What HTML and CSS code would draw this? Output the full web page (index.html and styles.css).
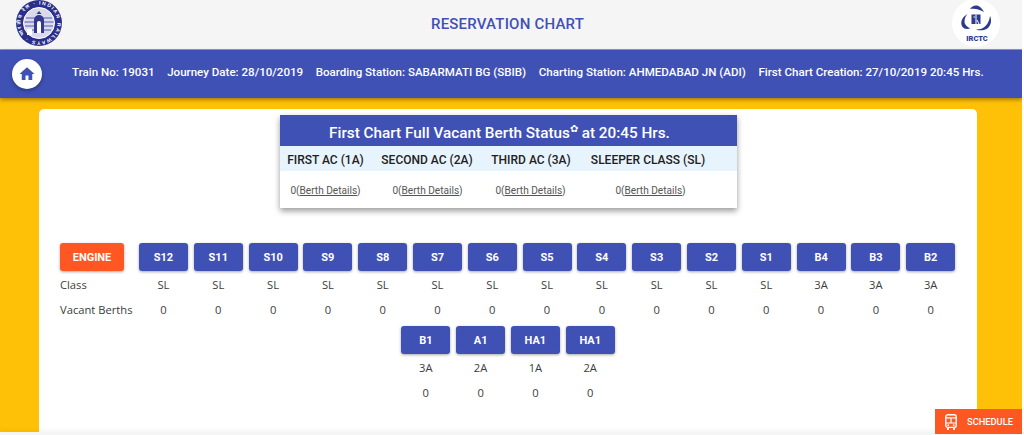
FILE: index.html
```html
<!DOCTYPE html>
<html lang="en">
<head>
    <meta charset="UTF-8">
    <meta name="viewport" content="width=device-width, initial-scale=1.0">
    <title>Reservation Chart</title>
    <link rel="stylesheet" href="styles.css">
</head>
<body>
    <header class="top-bar">
        <svg class="rail-logo" viewBox="0 0 46 46">
            <defs><path id="ringText" d="M23 4.500a18.500 18.500 0 1 1 -.01 0"/></defs>
            <circle cx="23" cy="23" r="23" fill="#2a2f8c"/>
            <circle cx="23" cy="23" r="15.500" fill="#d9daec"/>
            <circle cx="23" cy="23" r="15.500" fill="none" stroke="#fff" stroke-width="1"/>
            <text class="rail-logo-text"><textPath href="#ringText" textLength="112">INDIAN RAILWAYS · भारतीय रेल ·</textPath></text>
            <path d="M10 18h26M8.500 22h29M9 26h28M11 30h24" stroke="#5b5fa8" stroke-width="1.200"/>
            <path d="M18 33V20a5 5 0 0 1 10 0v13z" fill="#33388f"/>
            <path d="M21 33v-10a2 2 0 0 1 4 0v10z" fill="#fff"/>
            <path d="M20.500 14l2.500-3 2.500 3z" fill="#33388f"/>
            <rect x="11" y="29" width="5" height="6" fill="#fff"/>
        </svg>
        <h1 class="page-title">RESERVATION CHART</h1>
        <svg class="irctc-logo" viewBox="0 0 60 50">
            <circle cx="31" cy="23" r="24" fill="#fff"/>
            <path d="M25 9c3-4 9-6 14 3-4-2.500-9-4-14-3z" fill="#2b3990"/>
            <path d="M22.500 14c-5 3-8 8-5 13 1.500 2 4 2.500 8 1.500-3-1.500-6-3.500-6-7 0-3 1-5 3-7.500z" fill="#2b3990"/>
            <path d="M45 16c2 4 1 9-2 12-3 2.500-8 3-12 1.500 4 0 7.500-1 9.500-3.500 2.500-2.500 4-6 4.500-10z" fill="#2b3990"/>
            <rect x="26.500" y="14.500" width="9" height="9.500" fill="#2b3990"/>
            <path d="M31 14.500v9.500M28.500 17h1.500M32 20l2 4" stroke="#fff" stroke-width="1"/>
            <text class="irctc-text" x="32" y="40.500" text-anchor="middle">IRCTC</text>
        </svg>
    </header>

    <nav class="info-bar">
        <a class="home-btn" href="#">
            <svg viewBox="0 0 24 24" width="18" height="18"><path d="M10 20v-6h4v6h5v-8h3L12 3 2 12h3v8z" fill="#3f51b5"/></svg>
        </a>
        <div class="info-items">
            <span>Train No: 19031</span>
            <span>Journey Date: 28/10/2019</span>
            <span>Boarding Station: SABARMATI BG (SBIB)</span>
            <span>Charting Station: AHMEDABAD JN (ADI)</span>
            <span>First Chart Creation: 27/10/2019 20:45 Hrs.</span>
        </div>
    </nav>

    <main class="content">
        <div class="card">
            <section class="status-box">
                <h2 class="status-title">First Chart Full Vacant Berth Status<sup class="star">✿</sup> at 20:45 Hrs.</h2>
                <div class="status-grid status-head">
                    <div>FIRST AC (1A)</div>
                    <div>SECOND AC (2A)</div>
                    <div>THIRD AC (3A)</div>
                    <div>SLEEPER CLASS (SL)</div>
                </div>
                <div class="status-grid status-body">
                    <div>0(<a href="#">Berth Details</a>)</div>
                    <div>0(<a href="#">Berth Details</a>)</div>
                    <div>0(<a href="#">Berth Details</a>)</div>
                    <div>0(<a href="#">Berth Details</a>)</div>
                </div>
            </section>

            <section class="coach-row">
                <div class="coach coach-label">
                    <button class="btn engine">ENGINE</button>
                    <div class="cell">Class</div>
                    <div class="cell">Vacant Berths</div>
                </div>
                <div class="coach"><button class="btn">S12</button><div class="cell">SL</div><div class="cell">0</div></div>
                <div class="coach"><button class="btn">S11</button><div class="cell">SL</div><div class="cell">0</div></div>
                <div class="coach"><button class="btn">S10</button><div class="cell">SL</div><div class="cell">0</div></div>
                <div class="coach"><button class="btn">S9</button><div class="cell">SL</div><div class="cell">0</div></div>
                <div class="coach"><button class="btn">S8</button><div class="cell">SL</div><div class="cell">0</div></div>
                <div class="coach"><button class="btn">S7</button><div class="cell">SL</div><div class="cell">0</div></div>
                <div class="coach"><button class="btn">S6</button><div class="cell">SL</div><div class="cell">0</div></div>
                <div class="coach"><button class="btn">S5</button><div class="cell">SL</div><div class="cell">0</div></div>
                <div class="coach"><button class="btn">S4</button><div class="cell">SL</div><div class="cell">0</div></div>
                <div class="coach"><button class="btn">S3</button><div class="cell">SL</div><div class="cell">0</div></div>
                <div class="coach"><button class="btn">S2</button><div class="cell">SL</div><div class="cell">0</div></div>
                <div class="coach"><button class="btn">S1</button><div class="cell">SL</div><div class="cell">0</div></div>
                <div class="coach"><button class="btn">B4</button><div class="cell">3A</div><div class="cell">0</div></div>
                <div class="coach"><button class="btn">B3</button><div class="cell">3A</div><div class="cell">0</div></div>
                <div class="coach"><button class="btn">B2</button><div class="cell">3A</div><div class="cell">0</div></div>
            </section>

            <section class="coach-row coach-row-center">
                <div class="coach"><button class="btn">B1</button><div class="cell">3A</div><div class="cell">0</div></div>
                <div class="coach"><button class="btn">A1</button><div class="cell">2A</div><div class="cell">0</div></div>
                <div class="coach"><button class="btn">HA1</button><div class="cell">1A</div><div class="cell">0</div></div>
                <div class="coach"><button class="btn">HA1</button><div class="cell">2A</div><div class="cell">0</div></div>
            </section>
        </div>
    </main>
    <div class="bottom-strip"></div>

    <a class="schedule-btn" href="#">
        <svg viewBox="0 0 12 16" width="12" height="16">
            <rect x="0.800" y="0.800" width="10.400" height="12.600" rx="2" fill="none" stroke="#fff" stroke-width="1.400"/>
            <path d="M1 3.800h10M1 9h10M6 3.800V9" stroke="#fff" stroke-width="1.200"/>
            <path d="M2 13.500h2V16H2zM8 13.500h2V16H8z" fill="#fff"/>
            <circle cx="3.300" cy="11.200" r="0.900" fill="#fff"/>
            <circle cx="8.700" cy="11.200" r="0.900" fill="#fff"/>
        </svg>
        SCHEDULE
    </a>
</body>
</html>
```

FILE: styles.css
```css
body {
    margin: 0;
    width: 1022px;
    height: 435px;
    overflow: hidden;
    background-color: #ffc107;
    font-family: Roboto, sans-serif;
    display: flex;
    flex-direction: column;
    border-right: 2px solid #fff;
}

/* top header */
.top-bar {
    height: 50px;
    flex: none;
    box-sizing: border-box;
    background-color: #f5f5f5;
    border-bottom: 1px solid #8d97bd;
    display: flex;
    align-items: flex-start;
    justify-content: space-between;
    padding: 0 17px 0 16px;
}
.rail-logo {
    width: 46px;
    height: 46px;
}
.rail-logo-text {
    font-family: "Liberation Sans", "Noto Sans", sans-serif;
    font-size: 5px;
    font-weight: bold;
    fill: #fff;
}
.page-title {
    margin: 15px 0 0 8px;
    font-size: 15px;
    line-height: 18px;
    font-weight: 500;
    color: #3f51b5;
    letter-spacing: 0.2px;
}
.irctc-logo {
    width: 60px;
    height: 50px;
}
.irctc-text {
    font-family: Roboto, sans-serif;
    font-size: 7.500px;
    font-weight: 900;
    fill: #2b3990;
}

/* blue info bar */
.info-bar {
    height: 48px;
    flex: none;
    background-color: #3f51b5;
    box-shadow: 0 2px 4px rgba(0, 0, 0, 0.35);
    display: flex;
    align-items: center;
    padding-left: 12px;
    position: relative;
}
.home-btn {
    width: 30px;
    height: 30px;
    border-radius: 50%;
    background-color: #fff;
    display: flex;
    align-items: center;
    justify-content: center;
    box-shadow: 0 2px 4px rgba(0, 0, 0, 0.3);
}
.info-items {
    margin: -5px 0 0 30px;
    display: flex;
    gap: 12.600px;
    color: #fff;
    font-size: 11.570px;
    font-weight: 500;
    white-space: nowrap;
}

/* white card */
.content {
    flex: 1;
    padding: 11px 45px 0 39px;
    min-height: 0;
}
.card {
    background-color: #fff;
    height: 100%;
    border-radius: 5px 5px 0 0;
    padding-top: 6px;
    padding-left: 21px;
    box-sizing: border-box;
}
.bottom-strip {
    height: 3px;
    flex: none;
    background-color: #f5f5f5;
    box-shadow: 0 -2px 4px rgba(0, 0, 0, 0.06);
}

.status-box {
    width: 457px;
    margin-left: 220px;
    background-color: #fff;
    box-shadow: 0 3px 6px rgba(0, 0, 0, 0.4);
}
.status-title {
    margin: 0;
    height: 31px;
    line-height: 37px;
    padding-right: 18px;
    background-color: #3f51b5;
    color: #fff;
    font-size: 15.300px;
    font-weight: 500;
    text-align: center;
}
.star {
    font-size: 10px;
    line-height: 0;
}
.status-grid {
    display: grid;
    text-align: center;
}
.status-head {
    grid-template-columns: 91px 112px 96px 138px;
    height: 25px;
    line-height: 28px;
    background-color: #e8f4fd;
    font-size: 12px;
    font-weight: 500;
    color: #212121;
}
.status-body {
    grid-template-columns: 91px 113px 93px 147px;
    height: 37px;
    line-height: 39px;
    font-size: 10.100px;
    color: #555;
}
.status-body a {
    color: #555;
}

/* coaches */
.coach-row {
    display: flex;
    gap: 5.800px;
    margin-top: 35px;
}
.coach-row-center {
    justify-content: center;
    margin-top: 4px;
    margin-left: -21px;
}
.coach {
    width: 49px;
    display: flex;
    flex-direction: column;
    align-items: center;
}
.coach-label {
    width: 73.200px;
    align-items: flex-start;
}
.btn {
    width: 49px;
    height: 28px;
    padding: 0;
    border: none;
    border-radius: 3px;
    background-color: #3f51b5;
    color: #fff;
    font-family: Roboto, sans-serif;
    font-size: 11px;
    font-weight: 700;
    box-shadow: 0 1px 3px rgba(0, 0, 0, 0.35);
    margin-bottom: 1px;
}
.engine {
    width: 64px;
    background-color: #ff5722;
}
.cell {
    height: 25px;
    line-height: 25px;
    font-family: "Open Sans", sans-serif;
    font-size: 11.200px;
    color: #3c3c3c;
    white-space: nowrap;
}

.schedule-btn {
    position: absolute;
    left: 935px;
    top: 409px;
    width: 87px;
    height: 25px;
    background-color: #ff5722;
    color: #fff;
    font-size: 9.300px;
    font-weight: 500;
    text-decoration: none;
    display: flex;
    align-items: center;
    gap: 10px;
    padding-left: 10px;
    box-sizing: border-box;
}
```
